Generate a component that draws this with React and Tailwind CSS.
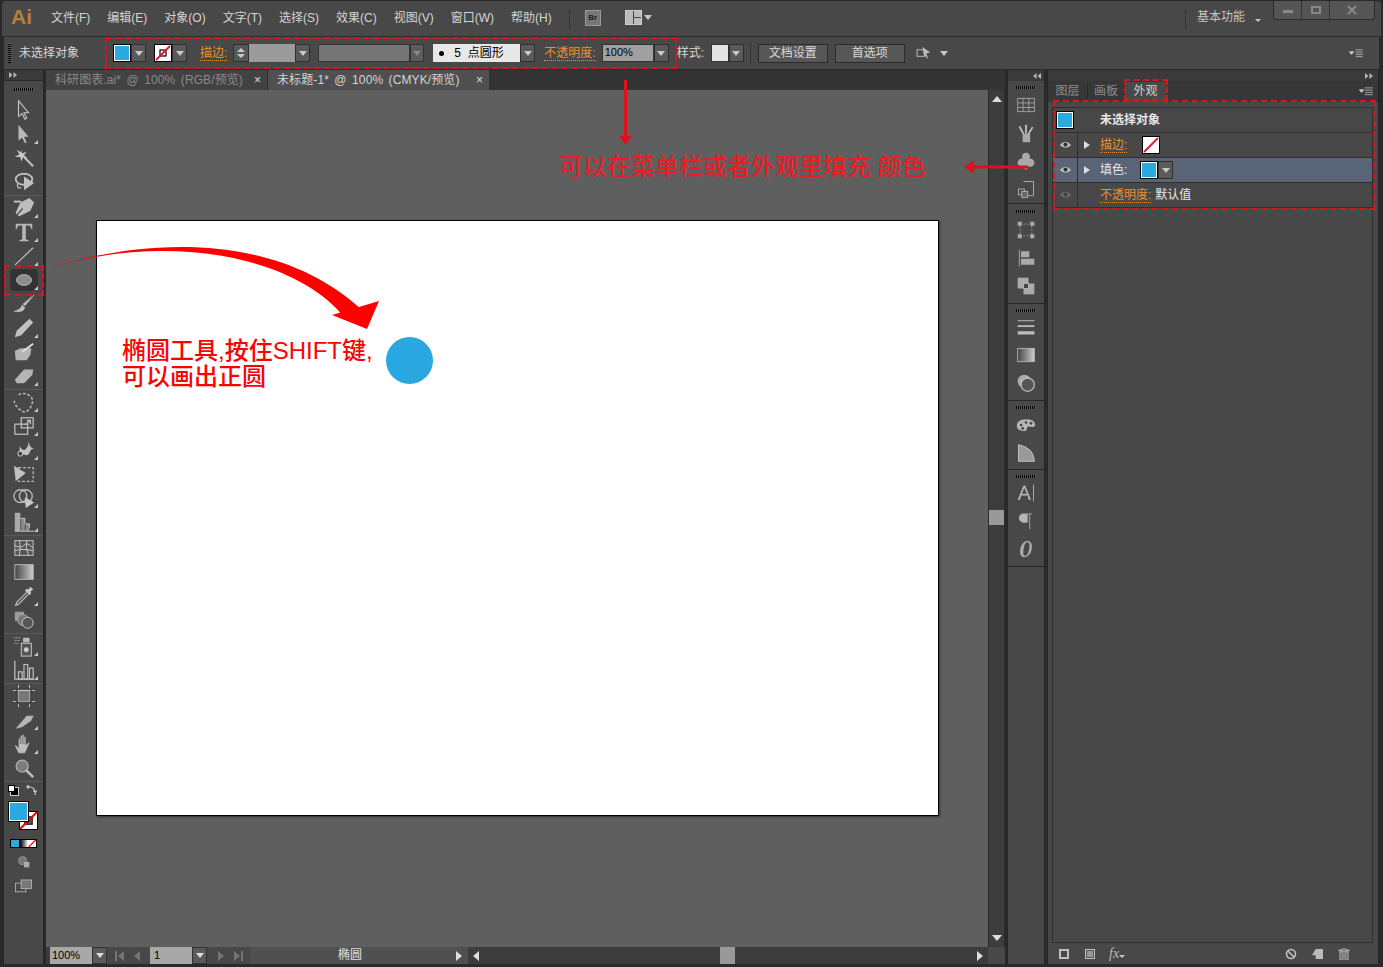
import React from "react";

const menus = ["文件(F)", "编辑(E)", "对象(O)", "文字(T)", "选择(S)", "效果(C)", "视图(V)", "窗口(W)", "帮助(H)"];

const Arrow = ({ className = "border-t-[#c8c8c8]" }) => (
  <span className={`block w-0 h-0 border-x-[4px] border-x-transparent border-t-[5px] ${className}`} />
);

const Dropdown = ({ w = "w-[15px]" }) => (
  <div className={`${w} h-[18px] bg-[#5a5a5a] border border-[#2f2f2f] flex items-center justify-center shrink-0`}>
    <Arrow />
  </div>
);

const Swatch = ({ none, box }) => (
  <div className="w-[18px] h-[18px] border border-black shrink-0">
    {none ? (
      <svg viewBox="0 0 16 16" className="w-full h-full bg-white block">
        {box && <rect x="5" y="5" width="6" height="6" fill="none" stroke="#111" strokeWidth="1.300" />}
        <path d="M1 15 15 1" stroke="#e0142c" strokeWidth="1.800" />
      </svg>
    ) : (
      <div className="w-full h-full border border-white bg-[#29abe2]" />
    )}
  </div>
);

const Orange = ({ children, className = "" }) => (
  <span className={`text-[#e8912d] border-b border-dotted border-[#e8912d] leading-[14px] ${className}`}>{children}</span>
);

const Grip = () => (
  <div className="h-[3px] w-[20px] mx-auto bg-[repeating-linear-gradient(90deg,#000_0,#000_1px,#5c5c5c_1px,#5c5c5c_2px)]" />
);

const Collapse = ({ left }) => (
  <svg viewBox="0 0 8 6" width="8" height="6" className="block">
    <path d={left ? "M3.500 0v6L0 3zM8 0v6L4.500 3z" : "M0 0v6l3.500-3zM4.500 0v6L8 3z"} fill="#b5b5b5" />
  </svg>
);

const s = { fill: "none", stroke: "#bdbdbd", strokeWidth: 1.4 };

// toolbar drawings, all in a 24 box
const icons = {
  select: <path d="M6 2v17l4-3 3 6 2-1-3-6h5z" fill="#4a4a4a" stroke="#c4c4c4" strokeWidth="1.200" />,
  direct: <path d="M6 2v17l4-3 3 6 2-1-3-6h5z" fill="#b8b8b8" />,
  wand: (
    <>
      <path d="M12 11l10 10" stroke="#bdbdbd" strokeWidth="2.400" />
      <path d="M9 2l1 5 5-2-3 4 4 3-5-1-2 5-1-5-6 0 5-3-3-5 5 3z" fill="#c8c8c8" />
    </>
  ),
  lasso: (
    <>
      <ellipse cx="12" cy="9" rx="9" ry="6" {...s} strokeWidth="2" />
      <path d="M9 18q-5 2-4-4" {...s} />
      <path d="M12 6l11 7-11 8z" fill="#c0c0c0" />
    </>
  ),
  pen: (
    <>
      <path d="M1 5h8" stroke="#c8c8c8" strokeWidth="2" />
      <path d="M18 1l5 5-4 9-12 6-2-1 6-7-1-1-6 7-1-2 5-11z" fill="#bdbdbd" />
    </>
  ),
  type: <path d="M3 3h18v6h-1q-1-4-3-4h-3v15l3 1v1H7v-1l3-1V5H7q-2 0-3 4H3z" fill="#b5b5b5" />,
  line: <path d="M2 22 22 3" stroke="#c0c0c0" strokeWidth="1.300" />,
  ellipse: <ellipse cx="12" cy="12" rx="9" ry="6.500" fill="#8c8c8c" stroke="#c0c0c0" />,
  brush: <path d="M23 2 11 12l2 2zM10 13q-1 5-9 7 5 1 8 0t4-4z" fill="#c0c0c0" stroke="#c0c0c0" strokeWidth=".6" />,
  pencil: <path d="M18 2l4 4-13 14-7 2 2-7z" fill="#c0c0c0" />,
  blob: (
    <>
      <path d="M2 11l6-3h12l-1 7-4 6H3z" fill="#b5b5b5" />
      <path d="M10 12 22 3" stroke="#e0e0e0" strokeWidth="2" />
    </>
  ),
  eraser: <path d="M2 16 12 5h10l-1 6-9 9H4z" fill="#b5b5b5" />,
  rotate: <path d="M6 4q6-3 12 1t1 13-13 1-2-9" {...s} strokeDasharray="3 2" strokeWidth="1.600" />,
  scale: (
    <>
      <rect x="2" y="10" width="14" height="11" {...s} />
      <rect x="9" y="3" width="13" height="11" {...s} />
      <path d="M13 11l6-5m-4 0h4v4" {...s} />
    </>
  ),
  warp: (
    <>
      <path d="M4 21q4-4 3-13 4 6 7 3t3-8q2 8 6 7-4 1-5 5t-6 2-8 4z" fill="#c0c0c0" />
      <circle cx="8" cy="16" r="2.700" fill="#444" stroke="#ddd" />
    </>
  ),
  free: (
    <>
      <rect x="6" y="5" width="16" height="15" {...s} strokeDasharray="3 2" />
      <path d="M1 3l13 8-11 9z" fill="#c0c0c0" />
    </>
  ),
  shape: (
    <>
      <circle cx="8" cy="10" r="7" {...s} />
      <circle cx="14" cy="10" r="7" {...s} />
      <path d="M13 11l10 6-9 6z" fill="#c8c8c8" />
    </>
  ),
  graph3d: (
    <>
      <path d="M2 2h6v20H2z" fill="#aaa" />
      <path d="M9 8h4v14H9zM14 14h4v8h-4z" fill="#8c8c8c" />
      <path d="M2 22h21M8 8h5v5M13 14h5v4" stroke="#ccc" fill="none" />
    </>
  ),
  mesh: (
    <>
      <rect x="2" y="4" width="20" height="16" fill="#555" stroke="#c8c8c8" />
      <path d="M2 9q7 4 10 0t10 3M7 4q2 7 0 16M15 4q-2 7 2 16M2 15q8-3 20 0" fill="none" stroke="#d0d0d0" />
    </>
  ),
  gradient: (
    <>
      <defs>
        <linearGradient id="gr">
          <stop offset="0" stopColor="#444" />
          <stop offset="1" stopColor="#ccc" />
        </linearGradient>
      </defs>
      <rect x="2" y="4" width="20" height="16" fill="url(#gr)" stroke="#bbb" />
    </>
  ),
  dropper: (
    <>
      <path d="M15 8 4 19l-1 3 3-1L17 10" {...s} />
      <path d="M13 6l5 5 2-2-1-2 3-2-3-3-2 3-2-1z" fill="#c8c8c8" />
    </>
  ),
  blend: (
    <>
      <rect x="2" y="3" width="10" height="10" fill="#9a9a9a" />
      <circle cx="11" cy="12" r="6" fill="#777" stroke="#aaa" />
      <circle cx="16" cy="15" r="6" fill="#555" stroke="#ccc" />
    </>
  ),
  spray: (
    <>
      <path d="M1 3h7M2 6h6M1 9h5" stroke="#ccc" strokeDasharray="1 1" />
      <rect x="9" y="9" width="11" height="14" fill="#555" stroke="#ccc" />
      <circle cx="14.500" cy="16" r="2.700" fill="#ccc" />
      <rect x="11" y="3" width="7" height="5" fill="#bbb" />
    </>
  ),
  column: (
    <>
      <path d="M2 2v20h21" {...s} />
      <path d="M6 14h4v8H6zM12 6h4v16h-4zM18 10h4v12h-4z" fill="none" stroke="#c0c0c0" strokeWidth="1.300" />
    </>
  ),
  artboard: (
    <>
      <rect x="6" y="6" width="12" height="12" fill="#777" stroke="#aaa" />
      <path d="M0 6h3M5 6h14M21 6h3M0 18h3M21 18h3M6 0v3M18 0v3M6 21v3M18 21v3" stroke="#d0d0d0" />
    </>
  ),
  slice: <path d="M2 22 15 7h8l-3 6-10 7z" fill="#b5b5b5" stroke="#444" strokeWidth=".5" />,
  hand: <path d="M6 22l-4-8 1-1 3 3V6h2v6V3h2v9V2h2v10V4h2v9l3-3 1 1-3 7-2 4z" fill="#bdbdbd" stroke="#555" strokeWidth=".4" />,
  zoom: (
    <>
      <circle cx="10" cy="10" r="6.500" fill="#7c7c7c" stroke="#aaa" strokeWidth="1.500" />
      <path d="M14 14l8 8" stroke="#bdbdbd" strokeWidth="2.800" />
    </>
  ),
  drawMode: (
    <>
      <circle cx="10" cy="10" r="6" fill="#777" stroke="#aaa" />
      <rect x="12" y="12" width="8" height="8" fill="#aaa" />
    </>
  ),
  screen: (
    <>
      <rect x="2" y="9" width="13" height="11" fill="#4a4a4a" stroke="#bbb" />
      <rect x="9" y="5" width="13" height="11" fill="#777" stroke="#bbb" />
    </>
  ),
  swatches: (
    <>
      <rect x="2" y="4" width="20" height="16" fill="none" stroke="#aaa" />
      <path d="M2 9.500h20M2 15h20M8.500 4v16M15.500 4v16" stroke="#aaa" />
    </>
  ),
  brushes: (
    <>
      <rect x="8" y="13" width="9" height="10" fill="#aaa" />
      <path d="M12 13V2M9 13 4 4M15 13l5-8" stroke="#c8c8c8" strokeWidth="2" />
    </>
  ),
  club: <path d="M12 2a4.500 4.500 0 0 1 4 7 5 5 0 1 1-3 8l1 5h-4l1-5a5 5 0 1 1-3-8 4.500 4.500 0 0 1 4-7z" fill="#aaa" />,
  symbolsBox: (
    <>
      <path d="M9 3h12v17H14" fill="none" stroke="#bbb" />
      <rect x="3" y="12" width="7" height="7" fill="none" stroke="#bbb" />
      <rect x="7" y="15" width="7" height="7" fill="#666" stroke="#bbb" />
    </>
  ),
  transform: (
    <>
      <rect x="5" y="5" width="14" height="14" fill="none" stroke="#aaa" strokeDasharray="2 2" />
      <path d="M2 2h5v5H2zM17 2h5v5h-5zM2 17h5v5H2zM17 17h5v5h-5z" fill="#aaa" />
    </>
  ),
  align: (
    <>
      <path d="M4 2v20" stroke="#bbb" />
      <path d="M6 4h10v7H6zM6 13h16v7H6z" fill="#aaa" />
    </>
  ),
  pathfinder: (
    <>
      <rect x="2" y="2" width="13" height="13" fill="#aaa" />
      <rect x="9" y="9" width="13" height="13" fill="#aaa" />
      <rect x="9" y="9" width="6" height="6" fill="#444" stroke="#bbb" />
    </>
  ),
  stroke: <path d="M2 4h20v1H2zM2 10h20v2H2zM2 17h20v4H2z" fill="#bdbdbd" />,
  transparency: (
    <>
      <circle cx="10" cy="10" r="8" fill="#aaa" />
      <circle cx="14" cy="14" r="8" fill="#555" stroke="#bbb" strokeWidth="1.500" />
    </>
  ),
  palette: (
    <>
      <path d="M1 13q0-8 11-8t11 7q0 3-5 2t-5 2-1 3q-11 1-11-6z" fill="#b5b5b5" />
      <circle cx="6" cy="12" r="1.600" fill="#444" />
      <circle cx="12" cy="9" r="1.600" fill="#444" />
      <circle cx="18" cy="10" r="1.600" fill="#444" />
      <circle cx="8" cy="16" r="1.600" fill="#444" />
    </>
  ),
  libs: <path d="M3 2v20h19Q22 6 3 2z" fill="#999" stroke="#ccc" />,
  charA: (
    <>
      <path d="M2 20 9 3h2l7 17h-3l-1-5H6l-1 5zM7 13h6l-3-7z" fill="#b5b5b5" />
      <path d="M21 2v20" stroke="#bbb" />
    </>
  ),
  para: <path d="M9 3h10v1h-2v18h-1V4h-2v10H9a5.500 5.500 0 0 1 0-11z" fill="#b5b5b5" />,
  open: <path d="M13 2q7 0 6 9t-9 11q-6 0-5-9t8-11zm0 2q-3 1-4 9t2 7q4-1 5-9t-3-7z" fill="#aaa" />,
};

const Icon = ({ name, size = 22 }) => (
  <svg viewBox="0 0 24 24" width={size} height={size} className="block">
    {icons[name]}
  </svg>
);

const toolGroups = [
  [["select"], ["direct", 1], ["wand"], ["lasso"]],
  [["pen", 1], ["type", 1], ["line", 1], ["ellipse", 1, 1], ["brush"], ["pencil", 1], ["blob"], ["eraser", 1]],
  [["rotate", 1], ["scale", 1], ["warp", 1], ["free"], ["shape", 1], ["graph3d", 1]],
  [["mesh"], ["gradient"], ["dropper", 1], ["blend"]],
  [["spray", 1], ["column", 1]],
  [["artboard"], ["slice", 1], ["hand", 1], ["zoom"]],
];

const Tool = ({ name, corner, active }) => (
  <div className="h-[24px] flex items-center justify-center relative">
    <div className={`w-[28px] h-[22px] flex items-center justify-center ${active ? "bg-[#333] rounded-sm" : ""}`}>
      <Icon name={name} size={active ? 20 : 22} />
    </div>
    {corner && (
      <span className="absolute right-[5px] bottom-[2px] w-0 h-0 border-l-[4px] border-l-transparent border-b-[4px] border-b-[#c8c8c8]" />
    )}
  </div>
);

const Toolbar = () => (
  <aside className="w-[41px] ml-[3px] mr-[2px] bg-[#484848] border-x border-[#262626] flex flex-col shrink-0">
    <div className="h-[11px] bg-[#3a3a3a] border-b border-[#2a2a2a] flex items-center pl-[5px]">
      <Collapse />
    </div>
    <div className="h-[17px] flex items-center">
      <Grip />
    </div>
    {toolGroups.map((group, i) => (
      <div key={i} className="pb-px border-b border-[#5a5a5a]">
        {group.map(([name, corner, active]) => (
          <Tool key={name} name={name} corner={corner} active={active} />
        ))}
      </div>
    ))}
    {/* colour controls */}
    <div className="h-[17px] flex items-center justify-between px-[6px]">
      <div className="w-[9px] h-[9px] bg-black border border-[#ccc] relative mt-[2px]">
        <div className="absolute -left-[3px] -top-[3px] w-[7px] h-[7px] bg-white border border-black" />
      </div>
      <svg viewBox="0 0 12 12" width="11" height="11" className="block">
        <path d="M4 2H1l2-2M1 2l2 2M1 2q8-1 9 6M10 8l-2-2M10 8l2-2M10 8v3" fill="none" stroke="#ccc" strokeWidth="1.200" />
      </svg>
    </div>
    <div className="h-[33px] mt-[3px] relative">
      <div className="absolute left-[15px] top-[9px] w-[19px] h-[19px] bg-white border border-black">
        <svg viewBox="0 0 18 18" className="w-full h-full block">
          <rect x="5" y="5" width="8" height="8" fill="#555" stroke="#111" />
          <path d="M0 18 18 0" stroke="#f00" strokeWidth="2.200" />
        </svg>
      </div>
      <div className="absolute left-[5px] top-0 w-[19px] h-[19px] bg-[#29abe2] border border-white outline outline-black" />
    </div>
    <div className="mt-[4px] ml-[6px] flex w-[27px] h-[9px] border border-black">
      <div className="w-[9px] bg-[#29abe2]" />
      <div className="w-[9px] bg-gradient-to-r from-black to-white" />
      <svg viewBox="0 0 9 9" className="w-[9px] h-full bg-white block">
        <path d="M0 9 9 0" stroke="#f00" strokeWidth="1.500" />
      </svg>
    </div>
    <div className="mt-[6px] flex justify-center">
      <Icon name="drawMode" size={16} />
    </div>
    <div className="mt-[6px] flex justify-center">
      <Icon name="screen" size={19} />
    </div>
  </aside>
);

const dockGroups = [
  { box: "h-[123px] pt-[5px]", list: "mt-[2px]", rows: ["swatches", "brushes", "club", "symbolsBox"] },
  { box: "h-[100px] pt-[6px]", list: "mt-[3px]", rows: ["transform", "align", "pathfinder"] },
  { box: "h-[97px] pt-[5px]", list: "mt-[1px]", rows: ["stroke", "gradient", "transparency"] },
  { box: "h-[69px] pt-[5px]", list: "mt-[2px]", rows: ["palette", "libs"] },
  { box: "h-[97px] pt-[5px]", list: "mt-[1px]", rows: ["charA", "para", "open"] },
];

const Dock = () => (
  <aside className="bg-[#484848] border-x border-[#262626] flex flex-col shrink-0">
    {dockGroups.map((g, i) => (
      <div key={i} className={`${g.box} border-b border-[#262626] flex flex-col shrink-0`}>
        <Grip />
        <div className={g.list}>
          {g.rows.map((name) => (
            <div key={name} className="h-[28px] flex items-center justify-center">
              <Icon name={name} size={20} />
            </div>
          ))}
        </div>
      </div>
    ))}
  </aside>
);

const Eye = ({ dim }) => (
  <svg viewBox="0 0 16 12" width="13" height="10" className={dim ? "opacity-30" : ""}>
    <path d="M1 6q7-8 14 0-7 7-14 0z" fill="#bbb" />
    <circle cx="8" cy="5.500" r="2.500" fill="#333" />
  </svg>
);

const Row = ({ eye, dim, arrow, selected, children }) => (
  <div className={`h-[25px] flex items-center border-b border-[#2f2f2f] ${selected ? "bg-[#5a6477]" : ""}`}>
    <div className="w-[25px] h-full flex items-center justify-center border-r border-[#2f2f2f] shrink-0">
      {eye && <Eye dim={dim} />}
    </div>
    <div className="w-[17px] flex items-center justify-center shrink-0">
      {arrow && (
        <span className="w-0 h-0 border-y-[4px] border-y-transparent border-l-[6px] border-l-[#ddd]" />
      )}
    </div>
    <div className="ml-[5px] flex items-center">{children}</div>
  </div>
);

const AppearancePanel = () => (
  <section className="flex-1 bg-[#484848] border-x border-[#262626] flex flex-col min-w-0">
    <div className="h-[21px] bg-[#373737] flex items-end relative text-[12px] leading-[18px]">
      <div className="w-[40px] h-[20px] text-center text-[#8c8c8c] border-r border-[#2a2a2a]">图层</div>
      <div className="w-[37px] h-[20px] text-center text-[#8c8c8c] border-r border-[#2a2a2a]">画板</div>
      <div className="w-[41px] h-[20px] text-center text-[#d0d0d0] bg-[#484848]">外观</div>
      <svg viewBox="0 0 16 10" width="15" height="9" className="absolute right-[4px] top-[6px]">
        <path d="M0 3h5L2.500 6zM6 1h9M6 3.500h9M6 6h9M6 8.500h9" fill="#ccc" stroke="#ccc" strokeWidth=".8" />
      </svg>
    </div>
    <div className="flex-1 ml-[4px] mr-[5px] mt-[5px] border border-[#2f2f2f] text-[12px] text-[#e8e8e8]">
      <div className="h-[25px] flex items-center border-b border-[#2f2f2f]">
        <div className="w-[47px] pl-[3px] shrink-0">
          <Swatch />
        </div>
        <b className="font-bold">未选择对象</b>
      </div>
      <Row eye arrow>
        <Orange>描边:</Orange>
        <div className="ml-[15px]">
          <Swatch none />
        </div>
      </Row>
      <Row eye arrow selected>
        <span>填色:</span>
        <div className="ml-[13px] flex">
          <Swatch />
          <Dropdown />
        </div>
      </Row>
      <Row eye dim>
        <Orange>不透明度:</Orange>
        <span className="ml-[4px]">默认值</span>
      </Row>
    </div>
    <div className="h-[21px] flex items-center pl-[11px] pr-[28px] text-[#bbb]">
      <span className="w-[10px] h-[10px] border-2 border-[#c0c0c0]" />
      <span className="w-[10px] h-[10px] border border-[#c0c0c0] bg-[#999] ml-[16px] outline outline-[#555] -outline-offset-2" />
      <i className="ml-[14px] text-[14px] leading-none [font-family:'Liberation_Serif',serif]">fx</i>
      <span className="mt-[6px]">
        <span className="block w-0 h-0 border-x-[3px] border-x-transparent border-t-[3px] border-t-[#c8c8c8]" />
      </span>
      <div className="ml-auto flex items-center gap-[15px]">
        <svg viewBox="0 0 12 12" width="12" height="12">
          <circle cx="6" cy="6" r="4.500" fill="none" stroke="#c0c0c0" strokeWidth="1.600" />
          <path d="M3 3l6 6" stroke="#c0c0c0" strokeWidth="1.600" />
        </svg>
        <svg viewBox="0 0 12 12" width="11" height="11">
          <path d="M4 1h8v11H4V8H0z" fill="#bbb" />
        </svg>
        <svg viewBox="0 0 12 12" width="12" height="12">
          <path d="M4 1h4v1h3v1H1V2h3zM2 4h8v8H2zM4 5v6M6 5v6M8 5v6" fill="none" stroke="#bbb" />
        </svg>
      </div>
    </div>
  </section>
);

const ControlBar = () => (
  <div className="h-[34px] bg-[#484848] border-y border-[#2b2b2b] mx-[4px] flex items-center text-[12px] text-[#d8d8d8] shrink-0">
    <div className="ml-[4px] w-[3px] h-[20px] bg-[repeating-linear-gradient(0deg,#000_0,#000_1px,#5c5c5c_1px,#5c5c5c_2px)]" />
    <span className="ml-[8px] w-[94px] shrink-0">未选择对象</span>
    <Swatch />
    <Dropdown />
    <div className="ml-[8px]">
      <Swatch none box />
    </div>
    <Dropdown />
    <Orange className="ml-[13px]">描边:</Orange>
    <div className="ml-[6px] w-[16px] h-[18px] bg-[#585858] border border-[#2f2f2f] flex flex-col items-center justify-center gap-[2px]">
      <span className="w-0 h-0 border-x-[4px] border-x-transparent border-b-[4px] border-b-[#c8c8c8]" />
      <span className="w-0 h-0 border-x-[4px] border-x-transparent border-t-[4px] border-t-[#c8c8c8]" />
    </div>
    <div className="w-[46px] h-[18px] bg-[#9b9b9b]" />
    <Dropdown />
    <div className="ml-[8px] w-[92px] h-[18px] bg-[#757575] border border-[#333]" />
    <div className="w-[14px] h-[18px] bg-[#5c5c5c] border border-[#333] flex items-center justify-center">
      <Arrow className="border-t-[#888]" />
    </div>
    <div className="ml-[9px] w-[87px] h-[18px] bg-[#e8e8e8] text-black flex items-center pl-[6px] whitespace-pre">
      <span className="w-[5px] h-[5px] rounded-full bg-black mr-[10px]" />
      <span>5  点圆形</span>
    </div>
    <Dropdown />
    <Orange className="ml-[9px]">不透明度:</Orange>
    <div className="ml-[6px] w-[52px] h-[18px] bg-[#a0a0a0] border border-[#333] text-black text-[11px] leading-[14px] pl-[2px]">100%</div>
    <Dropdown />
    <span className="ml-[8px] w-[34px] shrink-0">样式:</span>
    <div className="w-[18px] h-[18px] bg-[#e4e4e4] border border-[#333]" />
    <Dropdown />
    <div className="ml-[6px] w-px h-[22px] bg-[#333]" />
    <button className="ml-[7px] w-[70px] h-[19px] bg-[#575757] border border-[#2b2b2b] leading-[16px]">文档设置</button>
    <button className="ml-[7px] w-[70px] h-[19px] bg-[#575757] border border-[#2b2b2b] leading-[16px]">首选项</button>
    <svg viewBox="0 0 18 16" width="17" height="15" className="ml-[11px]">
      <rect x="1" y="4" width="8" height="7" fill="none" stroke="#bbb" />
      <path d="M7 1l8 6-4 1 2 6-5-5z" fill="#bbb" />
    </svg>
    <span className="ml-[7px]">
      <Arrow />
    </span>
    <svg viewBox="0 0 16 10" width="15" height="9" className="ml-auto mr-[15px]">
      <path d="M0 3h5L2.500 6zM7 1h8M7 3.500h8M7 6h8M7 8.500h8" fill="#ccc" stroke="#ccc" strokeWidth=".8" />
    </svg>
  </div>
);

const TitleBar = () => (
  <div className="h-[35px] bg-[#484848] rounded-t-[4px] mx-[2px] mt-[1px] flex items-start text-[12px] text-[#d4d4d4] shrink-0 relative">
    <span className="ml-[9px] mt-[3px] text-[21px] leading-[26px] font-bold text-[#b5813a]">Ai</span>
    <div className="ml-[19px] mt-[8px] flex gap-[17px] leading-[18px] whitespace-nowrap">
      {menus.map((m) => (
        <span key={m}>{m}</span>
      ))}
    </div>
    <div className="ml-[17px] mt-[8px] w-px h-[20px] bg-[#333]" />
    <div className="ml-[15px] mt-[9px] w-[16px] h-[16px] bg-[#777] border border-[#999] text-[8px] font-bold leading-[14px] text-center text-[#222]">Br</div>
    <div className="ml-[24px] mt-[9px] w-[17px] h-[15px] border border-[#ccc] bg-[#444] grid grid-cols-2 gap-px">
      <span className="bg-[#bbb] row-span-2" />
      <span className="bg-[#bbb]" />
      <span className="bg-[#bbb]" />
    </div>
    <span className="ml-[2px] mt-[14px]">
      <Arrow />
    </span>
    <div className="ml-auto mt-[8px] w-px h-[20px] bg-[#333]" />
    <span className="ml-[11px] mt-[7px] leading-[18px] text-[#c4c4c4]">基本功能</span>
    <span className="ml-[10px] mt-[18px]">
      <span className="block w-0 h-0 border-x-[3px] border-x-transparent border-t-[3px] border-t-[#c8c8c8]" />
    </span>
    <div className="ml-[12px] mr-[6px] w-[102px] h-[19px] bg-[#555] border border-t-0 border-[#2b2b2b] rounded-b-[3px] flex text-[#888]">
      <div className="w-[28px] border-r border-[#333] flex items-center justify-center">
        <span className="w-[10px] h-[3px] bg-[#888] mt-[3px]" />
      </div>
      <div className="w-[28px] border-r border-[#333] flex items-center justify-center">
        <span className="w-[10px] h-[8px] border-2 border-[#888]" />
      </div>
      <div className="flex-1 flex items-center justify-center">
        <svg viewBox="0 0 10 10" width="10" height="10">
          <path d="M1 1l8 8M9 1l-8 8" stroke="#888" strokeWidth="2" />
        </svg>
      </div>
    </div>
  </div>
);

const Tabs = () => (
  <div className="h-[20px] bg-[#333] flex text-[12px] leading-[20px] whitespace-nowrap tracking-[0.1px] [word-spacing:2px] shrink-0">
    <div className="w-[222px] bg-[#424242] border-r border-[#2a2a2a] text-[#8a8a8a] pl-[9px] flex justify-between pr-[6px]">
      <span>科研图表.ai* @ 100% (RGB/预览)</span>
      <span className="text-[#ddd]">×</span>
    </div>
    <div className="w-[221px] bg-[#505050] text-[#d4d4d4] pl-[9px] flex justify-between pr-[6px]">
      <span>未标题-1* @ 100% (CMYK/预览)</span>
      <span className="text-[#ddd]">×</span>
    </div>
  </div>
);

const Artboard = () => (
  <div className="ml-[50px] mt-[130px] w-[843px] h-[596px] bg-white border border-black shadow-[1px_1px_2px_#333] relative">
    <p className="absolute left-[25px] top-[117px] text-[24px] leading-[26px] font-medium text-[#f00] whitespace-nowrap">
      椭圆工具,按住SHIFT键,
      <br />
      可以画出正圆
    </p>
    <div className="absolute left-[289px] top-[116px] w-[47px] h-[47px] rounded-full bg-[#29a7e1]" />
  </div>
);

const PageNav = ({ flip }) => (
  <div className="w-[43px] flex items-center justify-center bg-[#484848]">
    <svg viewBox="0 0 30 10" width="30" height="10" className={flip ? "block -scale-x-100" : "block"}>
      <path d="M1 0v10h2V0zM10 0v10L4 5zM26 0v10l-6-5z" fill="#747474" />
    </svg>
  </div>
);

const StatusBar = () => (
  <div className="h-[17px] bg-[#3c3c3c] flex items-stretch text-[11px] leading-[16px] text-black shrink-0">
    <div className="ml-[4px] w-[42px] bg-[#a8a8a8] pl-[2px]">100%</div>
    <div className="w-[15px] bg-[#5a5a5a] border border-[#333] flex items-center justify-center">
      <Arrow className="border-t-[#ddd]" />
    </div>
    <PageNav />
    <div className="w-[42px] bg-[#a8a8a8] pl-[4px]">1</div>
    <div className="w-[15px] bg-[#5a5a5a] border border-[#333] flex items-center justify-center">
      <Arrow className="border-t-[#ddd]" />
    </div>
    <PageNav flip />
    <div className="w-[200px] bg-[#505050] text-center text-[#e0e0e0] text-[12px]">椭圆</div>
    <div className="w-[18px] bg-[#505050] flex items-center justify-center">
      <span className="w-0 h-0 border-y-[5px] border-y-transparent border-l-[6px] border-l-[#ddd]" />
    </div>
    <div className="flex-1 bg-[#3c3c3c] relative flex items-center justify-between px-[5px]">
      <span className="w-0 h-0 border-y-[5px] border-y-transparent border-r-[6px] border-r-[#ddd]" />
      <span className="absolute left-[252px] top-0 w-[15px] h-full bg-[#999]" />
      <span className="w-0 h-0 border-y-[5px] border-y-transparent border-l-[6px] border-l-[#ddd]" />
    </div>
    <div className="w-[17px] bg-[#484848]" />
  </div>
);

const VScroll = () => (
  <div className="w-[16px] mr-px bg-[#3c3c3c] border-l border-[#2a2a2a] flex flex-col items-center justify-between pt-[6px] pb-[6px] relative shrink-0">
    <span className="w-0 h-0 border-x-[5px] border-x-transparent border-b-[6px] border-b-[#ddd]" />
    <span className="absolute left-0 top-[420px] w-full h-[15px] bg-[#999]" />
    <span className="w-0 h-0 border-x-[5px] border-x-transparent border-t-[6px] border-t-[#ddd]" />
  </div>
);

// red marks drawn on top of the screenshot
const Annotations = () => (
  <div className="absolute inset-0 pointer-events-none">
    <div className="absolute left-[105px] top-[37px] w-[572px] h-[32px] border-2 border-dashed border-[#e0101c]" />
    <div className="absolute left-[4px] top-[265px] w-[40px] h-[31px] border-2 border-dashed border-[#e0101c]" />
    <div className="absolute left-[1124px] top-[79px] w-[44px] h-[22px] border-2 border-dashed border-[#e0101c]" />
    <div className="absolute left-[1053px] top-[100px] w-[323px] h-[110px] border-2 border-dashed border-[#e0101c]" />
    <svg width="1383" height="967" className="absolute inset-0">
      <path d="M50 268C120 245 265 222 361 309L345 318C295 255 165 232 50 268Z" fill="#f00" />
      <path d="M379 301 332 315 367 329Z" fill="#f00" />
      <path d="M625.500 80V138" stroke="#e0101c" strokeWidth="3" />
      <path d="M619 136h13l-6.500 9z" fill="#e0101c" />
      <path d="M972 167h56" stroke="#e0101c" strokeWidth="3" />
      <path d="M974 160v14l-10-7z" fill="#e0101c" />
    </svg>
    <p className="absolute left-[559px] top-[152px] text-[24px] leading-[30px] font-medium text-[#ed1c24] whitespace-nowrap">
      可以在菜单栏或者外观里填充 颜色
    </p>
  </div>
);

export default function App() {
  return (
    <div className="w-[1383px] h-[967px] bg-[#2a2a2a] flex flex-col relative overflow-hidden [font-family:'Liberation_Sans','Noto_Sans_CJK_SC',sans-serif]">
      <TitleBar />
      <ControlBar />
      <div className="flex flex-1 min-h-0 pb-[3px]">
        <Toolbar />
        <main className="flex-1 min-w-0 flex flex-col">
          <Tabs />
          <div className="flex-1 flex min-h-0">
            <div className="flex-1 bg-[#5f5f5f] min-w-0">
              <Artboard />
            </div>
            <VScroll />
          </div>
          <StatusBar />
        </main>
        <div className="ml-[2px] flex flex-col w-[38px] shrink-0">
          <div className="h-[11px] bg-[#3a3a3a] border-x border-[#262626] flex items-center justify-end pr-[3px]">
            <Collapse left />
          </div>
          <Dock />
          <div className="flex-1 bg-[#484848] border-x border-[#262626]" />
        </div>
        <div className="ml-[2px] mr-[4px] flex-none w-[332px] flex flex-col">
          <div className="h-[11px] bg-[#3a3a3a] border-x border-[#262626] flex items-center justify-end pr-[5px]">
            <Collapse />
          </div>
          <AppearancePanel />
        </div>
      </div>
      <Annotations />
    </div>
  );
}
